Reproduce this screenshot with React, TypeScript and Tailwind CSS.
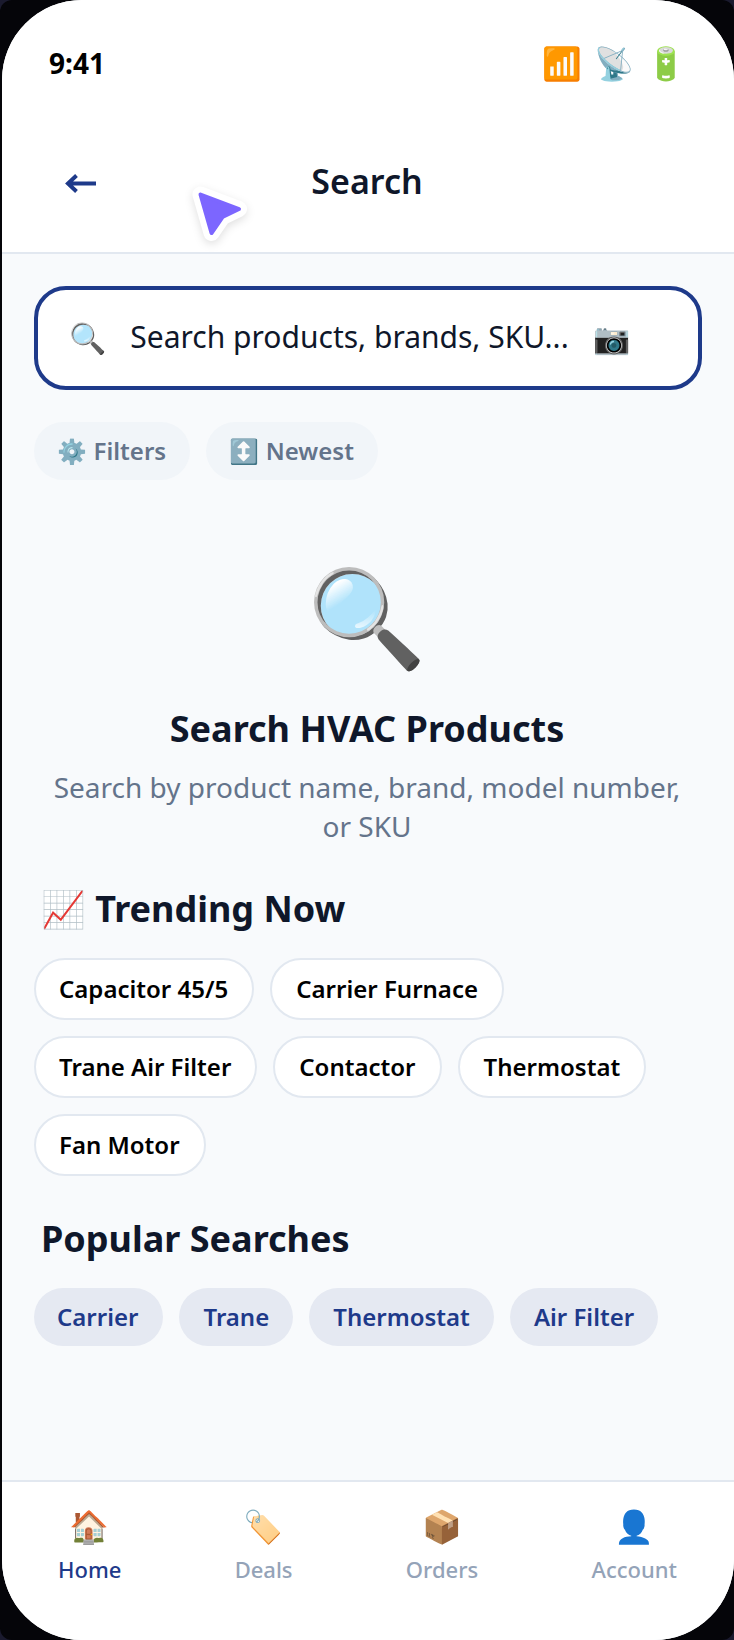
const emoji = "font-['Noto_Sans','Noto_Color_Emoji',sans-serif]";

const trending = [
  ["Capacitor 45/5", "Carrier Furnace"],
  ["Trane Air Filter", "Contactor", "Thermostat"],
  ["Fan Motor"],
];
const popular = ["Carrier", "Trane", "Thermostat", "Air Filter"];
const tabs = [
  { icon: "🏠", label: "Home", active: true },
  { icon: "🏷️", label: "Deals" },
  { icon: "📦", label: "Orders" },
  { icon: "👤", label: "Account" },
];

export default function App() {
  return (
    <div className={`h-[1640px] w-[734px] overflow-hidden bg-[#1a1a2e] ${emoji}`}>
      <div className="h-full w-full rounded-[12px] bg-[#050509] pl-[2px]">
        <div className="relative flex h-full w-full flex-col overflow-hidden rounded-[80px] bg-[#f8fafc]">
          <div className="bg-white">
            <div className="flex h-[126px] items-center justify-between pl-[47px] pr-[48px]">
              <span className="text-[28px] font-bold text-black">9:41</span>
              <div className="flex gap-[12px] text-[32px] leading-none">
                <span>📶</span>
                <span>📡</span>
                <span>🔋</span>
              </div>
            </div>
            <div className="relative flex h-[128px] items-start justify-center border-b-2 border-[#e2e8f0] pr-[2px] pt-[27px]">
              <svg className="absolute left-[62px] top-[46px]" width="34" height="24" viewBox="0 0 34 24" fill="none">
                <path d="M32 11.5H4M12.5 3.5L4 11.5L12.5 19.5" stroke="#1e3a8a" strokeWidth="4" />
              </svg>
              <h1 className="text-[34px] font-semibold leading-[56px] text-[#0f172a]">Search</h1>
            </div>
          </div>

          <svg className="absolute left-[188px] top-[186px] drop-shadow-[0_3px_4px_rgba(0,0,0,0.12)]" width="62" height="58" viewBox="0 0 62 58" fill="none">
            <path
              d="M10.5 8.5 L49 23 L32.5 31 L21.5 47 Z"
              fill="#7c66ff"
              stroke="#ffffff"
              strokeWidth="16"
              strokeLinejoin="round"
            />
            <path
              d="M10.5 8.5 L49 23 L32.5 31 L21.5 47 Z"
              fill="#7c66ff"
              stroke="#7c66ff"
              strokeWidth="4"
              strokeLinejoin="round"
            />
          </svg>

          <div className="flex flex-1 flex-col px-[32px] pt-[32px]">
            <div className="flex h-[104px] items-center rounded-[32px] border-[4px] border-[#1e3a8a] bg-white pl-[31px]">
              <span className="text-[30px] leading-none">🔍</span>
              <span className="ml-[24px] pb-[4px] text-[30px] text-[#0f172a]">Search products, brands, SKU...</span>
              <span className="ml-[25px] text-[30px] leading-none">📷</span>
            </div>

            <div className="mt-[32px] flex gap-[16px]">
              <div className="flex h-[58px] items-center rounded-full bg-[#f1f5f9] px-[23.5px] text-[24px] font-semibold text-[#64748b]">⚙️ Filters</div>
              <div className="flex h-[58px] items-center rounded-full bg-[#f1f5f9] px-[24px] text-[24px] font-semibold text-[#64748b]">↕️ Newest</div>
            </div>

            <div className="mt-[69px] flex flex-col items-center pr-[2px] text-center">
              <span className="text-[96px] leading-[131px]">🔍</span>
              <h2 className="mt-[24px] text-[36px] font-bold leading-[49px] text-[#0f172a]">Search HVAC Products</h2>
              <p className="mt-[15px] w-[640px] text-[28px] leading-[39px] text-[#64748b]">
                Search by product name, brand, model number, or SKU
              </p>
            </div>

            <h3 className="mt-[38px] pl-[7px] text-[36px] font-bold leading-[49px] text-[#0f172a]">📈 Trending Now</h3>
            <div className="mt-[25px] flex flex-col gap-[16px]">
              {trending.map((row) => (
                <div key={row[0]} className="flex gap-[16px]">
                  {row.map((chip) => (
                    <div key={chip} className="flex h-[62px] items-center rounded-full border-2 border-[#e2e8f0] bg-white px-[24px] first:pl-[23px] text-[24px] font-semibold text-black">
                      {chip}
                    </div>
                  ))}
                </div>
              ))}
            </div>

            <h3 className="mt-[38px] pl-[7px] text-[36px] font-bold leading-[49px] text-[#0f172a]">Popular Searches</h3>
            <div className="mt-[25px] flex gap-[16px]">
              {popular.map((chip) => (
                <div key={chip} className="flex h-[58px] items-center rounded-full bg-[#e5e9f2] px-[24px] first:pl-[23px] first:pr-[25px] text-[24px] font-semibold text-[#1e3a8a]">
                  {chip}
                </div>
              ))}
            </div>
          </div>

          <div className="flex h-[160px] items-start justify-between border-t-2 border-[#e2e8f0] bg-white pl-[56px] pr-[57px] pt-[22px]">
            {tabs.map((tab) => (
              <div key={tab.label} className="flex flex-col items-center">
                <span className="text-[32px] leading-[44px]">{tab.icon}</span>
                <span className={tab.active ? "mt-[5px] text-[22px] font-medium text-[#1e3a8a]" : "mt-[5px] text-[22px] font-medium text-[#94a3b8]"}>{tab.label}</span>
              </div>
            ))}
          </div>
        </div>
      </div>
    </div>
  );
}
